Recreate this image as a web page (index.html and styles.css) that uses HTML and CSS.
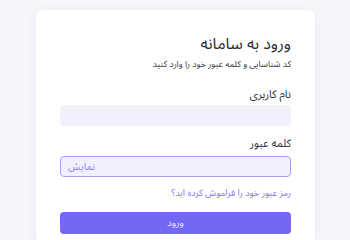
FILE: index.html
```html
<!DOCTYPE html>
<html lang="fa" dir="rtl">
<head>
<meta charset="utf-8">
<title>ورود به سامانه</title>
<link rel="stylesheet" href="styles.css">
</head>
<body>
<div class="page">
  <form class="card">
    <h1 class="title">ورود به سامانه</h1>
    <p class="subtitle">کد شناسایی و کلمه عبور خود را وارد کنید</p>
    <label class="label">نام کاربری</label>
    <div class="input"></div>
    <label class="label label-pass">کلمه عبور</label>
    <div class="input input-focus"><span class="toggle">نمایش</span></div>
    <a class="forgot" href="#">رمز عبور خود را فراموش کرده اید؟</a>
    <button class="btn" type="button">ورود</button>
  </form>
</div>
</body>
</html>
```
FILE: styles.css
```css
html, body {
  margin: 0;
  padding: 0;
  background: #f5f5fa;
  font-family: "Noto Sans Arabic", "Vazirmatn", "Noto Sans", "DejaVu Sans", sans-serif;
  color: #2f2f3a;
}
.page {
  padding: 10px 0 0 0;
  display: flex;
  justify-content: flex-start;
}
.card {
  margin-right: 35px;
  width: 279px;
  box-sizing: border-box;
  padding: 25px 24px 10px;
  background: #ffffff;
  border-radius: 7px;
  box-shadow: 0 2px 12px rgba(60, 60, 120, 0.06);
  display: flex;
  flex-direction: column;
}
.title {
  margin: 0;
  font-size: 16px;
  line-height: 19px;
  font-weight: 400;
  color: #2c2c35;
}
.subtitle {
  margin: 5px 0 0;
  font-size: 8.8px;
  line-height: 11px;
  color: #3a3a44;
}
.label {
  margin-top: 17px;
  font-size: 11px;
  line-height: 16px;
  color: #2f2f38;
}
.label-pass {
  margin-top: 10px;
}
.input {
  margin-top: 2px;
  height: 21px;
  box-sizing: border-box;
  background: #f1f0fd;
  border-radius: 4px;
  border: 1px solid #f1f0fd;
  display: flex;
  align-items: center;
  justify-content: flex-end;
  padding: 0 7px;
}
.label-pass + .input {
  margin-top: 4px;
}
.input-focus {
  border-color: #a99ef6;
}
.toggle {
  font-size: 10px;
  color: #8e82f3;
}
.forgot {
  margin-top: 8px;
  font-size: 9.2px;
  line-height: 16px;
  color: #7f72f2;
  text-decoration: none;
}
.btn {
  margin-top: 11px;
  height: 22px;
  border: 0;
  border-radius: 4px;
  background: #7367f6;
  color: #ecebff;
  font-family: inherit;
  font-size: 9.5px;
}
```
